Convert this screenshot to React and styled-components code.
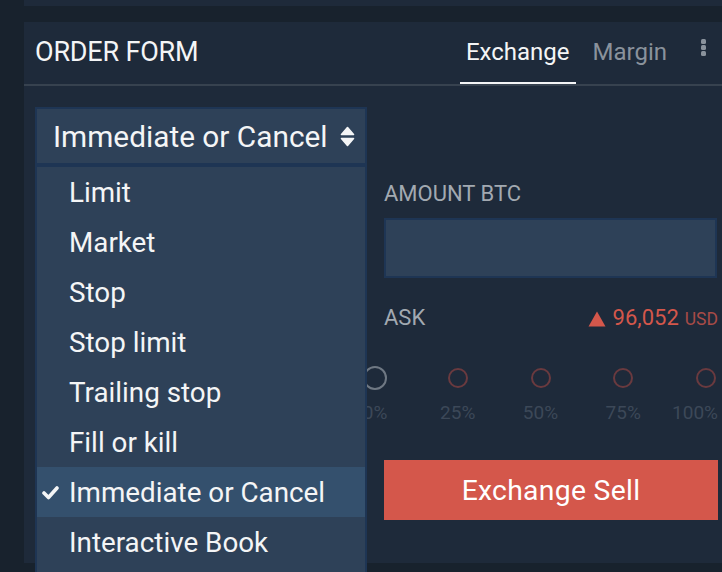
import React from 'react'
import styled, { createGlobalStyle } from 'styled-components'

const GlobalStyle = createGlobalStyle`
    html, body {
        margin: 0;
        padding: 0;
        background: #18222d;
        font-family: Roboto, "Liberation Sans", sans-serif;
        color: #f2f3f4;
        overflow: hidden;
    }
`

const Page = styled.div`
    height: 572px;
    padding-left: 24px;
    display: flex;
    flex-direction: column;
`

const TopStrip = styled.div`
    height: 6px;
    background: #1e2a3a;
    margin-bottom: 16px;
`

const Panel = styled.section`
    height: 541px;
    background: #1e2a3a;
    display: flex;
    flex-direction: column;
`

const Header = styled.header`
    height: 62px;
    padding: 0 16px 0 11px;
    display: flex;
    align-items: center;
    border-bottom: 2px solid #37424f;
`

const Title = styled.h2`
    margin: 0 0 2px;
    font-size: 27px;
    font-weight: 400;
    color: #f4f5f6;
    letter-spacing: -0.2px;
`

const Tabs = styled.nav`
    margin-left: auto;
    height: 100%;
    display: flex;
    gap: 11px;
`

const Tab = styled.div`
    height: 100%;
    padding: 0 6px;
    box-sizing: border-box;
    display: flex;
    align-items: center;
    font-size: 24px;
    color: ${p => p.active ? '#f4f5f6' : '#8a929c'};
    border-bottom: 2px solid ${p => p.active ? '#f4f5f6' : 'transparent'};
`

const Dots = styled.div`
    margin-left: 28px;
    margin-bottom: 12px;
    display: flex;
    flex-direction: column;
    gap: 1px;
    span {
        width: 5px;
        height: 5px;
        border-radius: 1.5px;
        background: #8a929c;
    }
`

const Body = styled.div`
    padding: 21px 4px 0 11px;
    display: grid;
    grid-template-columns: 332px 1fr;
    column-gap: 17px;
    align-items: start;
`

const SelectWrap = styled.div`
    position: relative;
    grid-column: 1;
    grid-row: 1;
    z-index: 2;
`

const Select = styled.div`
    height: 58px;
    box-sizing: border-box;
    border: 2px solid #1e3554;
    background: #2e4158;
    display: flex;
    align-items: center;
    padding: 0 10px 0 16px;
    font-size: 29.8px;
    color: #f4f5f6;
    svg { margin-left: auto; }
`

const Menu = styled.ul`
    position: absolute;
    top: 100%;
    left: 0;
    width: 100%;
    box-sizing: border-box;
    margin: 0;
    padding: 0 0 6px;
    list-style: none;
    background: #2e4158;
    border: 2px solid #1e3554;
`

const Item = styled.li`
    height: 50px;
    display: flex;
    align-items: center;
    padding-left: 32px;
    position: relative;
    font-size: 27.8px;
    color: #f4f5f6;
    background: ${p => p.selected ? '#34506d' : 'transparent'};
    svg {
        position: absolute;
        left: 5px;
        top: 18px;
    }
`

const Form = styled.div`
    grid-column: 2;
    grid-row: 2;
    padding-top: 16px;
    display: flex;
    flex-direction: column;
`

const Label = styled.div`
    font-size: 22px;
    line-height: 26px;
    color: #a2a9b1;
`

const Input = styled.div`
    margin-top: 11px;
    height: 60px;
    box-sizing: border-box;
    background: #2e4158;
    border: 2px solid #1e3554;
    margin-right: 1px;
`

const PriceRow = styled.div`
    margin-top: 27px;
    display: flex;
    align-items: baseline;
    justify-content: space-between;
`

const Price = styled.div`
    display: flex;
    align-items: baseline;
    font-size: 22px;
    line-height: 26px;
    color: #d4574b;
    svg { margin-right: 7px; align-self: center; }
    small {
        font-size: 17.5px;
        color: #a84b47;
        margin-left: 6px;
    }
`

const Slider = styled.div`
    margin: 34px 0 0 -21px;
    display: flex;
    justify-content: space-between;
`

const Stop = styled.div`
    width: 24px;
    display: flex;
    flex-direction: column;
    align-items: ${p => p.last ? 'flex-end' : 'center'};
    gap: 12px;
`

const Knob = styled.div`
    width: ${p => p.first ? 24 : 20}px;
    height: ${p => p.first ? 24 : 20}px;
    margin: ${p => p.first ? 0 : 2}px ${p => p.last ? 2 : 0}px;
    box-sizing: border-box;
    border-radius: 50%;
    border: 2px solid ${p => p.first ? '#6f7883' : '#6a3a3f'};
`

const Pct = styled.div`
    font-size: 19px;
    line-height: 22px;
    color: #3c4858;
    white-space: nowrap;
`

const SellButton = styled.button`
    margin-top: 36px;
    height: 60px;
    border: none;
    background: #d4574b;
    color: #fff;
    font-family: inherit;
    font-size: 28.3px;
    letter-spacing: 0.3px;
    padding: 0;
`

const SortIcon = () =>
    <svg width="15" height="21" viewBox="0 0 15 21">
        <path d="M7.5 1.5 L13.5 8.5 H1.5 Z" fill="#f4f5f6" stroke="#f4f5f6" strokeWidth="1.6" strokeLinejoin="round" />
        <path d="M7.5 19.5 L13.5 12.5 H1.5 Z" fill="#f4f5f6" stroke="#f4f5f6" strokeWidth="1.6" strokeLinejoin="round" />
    </svg>

const CheckIcon = () =>
    <svg width="17" height="15" viewBox="0 0 17 15">
        <path d="M2 8 L6.5 12.5 L15 3" fill="none" stroke="#f4f5f6" strokeWidth="3.6" strokeLinejoin="round" strokeLinecap="round" />
    </svg>

const UpTriangle = () =>
    <svg width="18" height="16" viewBox="0 0 18 16">
        <path d="M9 0.5 L17.5 15.5 H0.5 Z" fill="#d4574b" />
    </svg>

const orderTypes = [
    'Limit', 'Market', 'Stop', 'Stop limit', 'Trailing stop',
    'Fill or kill', 'Immediate or Cancel', 'Interactive Book',
]

const stops = ['0%', '25%', '50%', '75%', '100%']

const App = () => {
    const selected = 'Immediate or Cancel'
    return (
        <Page>
            <GlobalStyle />
            <TopStrip />
            <Panel>
                <Header>
                    <Title>ORDER FORM</Title>
                    <Tabs>
                        <Tab active>Exchange</Tab>
                        <Tab>Margin</Tab>
                    </Tabs>
                    <Dots><span /><span /><span /></Dots>
                </Header>
                <Body>
                    <SelectWrap>
                        <Select>
                            {selected}
                            <SortIcon />
                        </Select>
                        <Menu>
                            {orderTypes.map(t =>
                                <Item key={t} selected={t === selected}>
                                    {t === selected && <CheckIcon />}
                                    {t}
                                </Item>
                            )}
                        </Menu>
                    </SelectWrap>
                    <Form>
                        <Label>AMOUNT BTC</Label>
                        <Input />
                        <PriceRow>
                            <Label>ASK</Label>
                            <Price>
                                <UpTriangle />
                                96,052
                                <small>USD</small>
                            </Price>
                        </PriceRow>
                        <Slider>
                            {stops.map((s, i) =>
                                <Stop key={s} last={i === stops.length - 1}>
                                    <Knob first={i === 0} last={i === stops.length - 1} />
                                    <Pct>{s}</Pct>
                                </Stop>
                            )}
                        </Slider>
                        <SellButton>Exchange Sell</SellButton>
                    </Form>
                </Body>
            </Panel>
        </Page>
    )
}

export default App
